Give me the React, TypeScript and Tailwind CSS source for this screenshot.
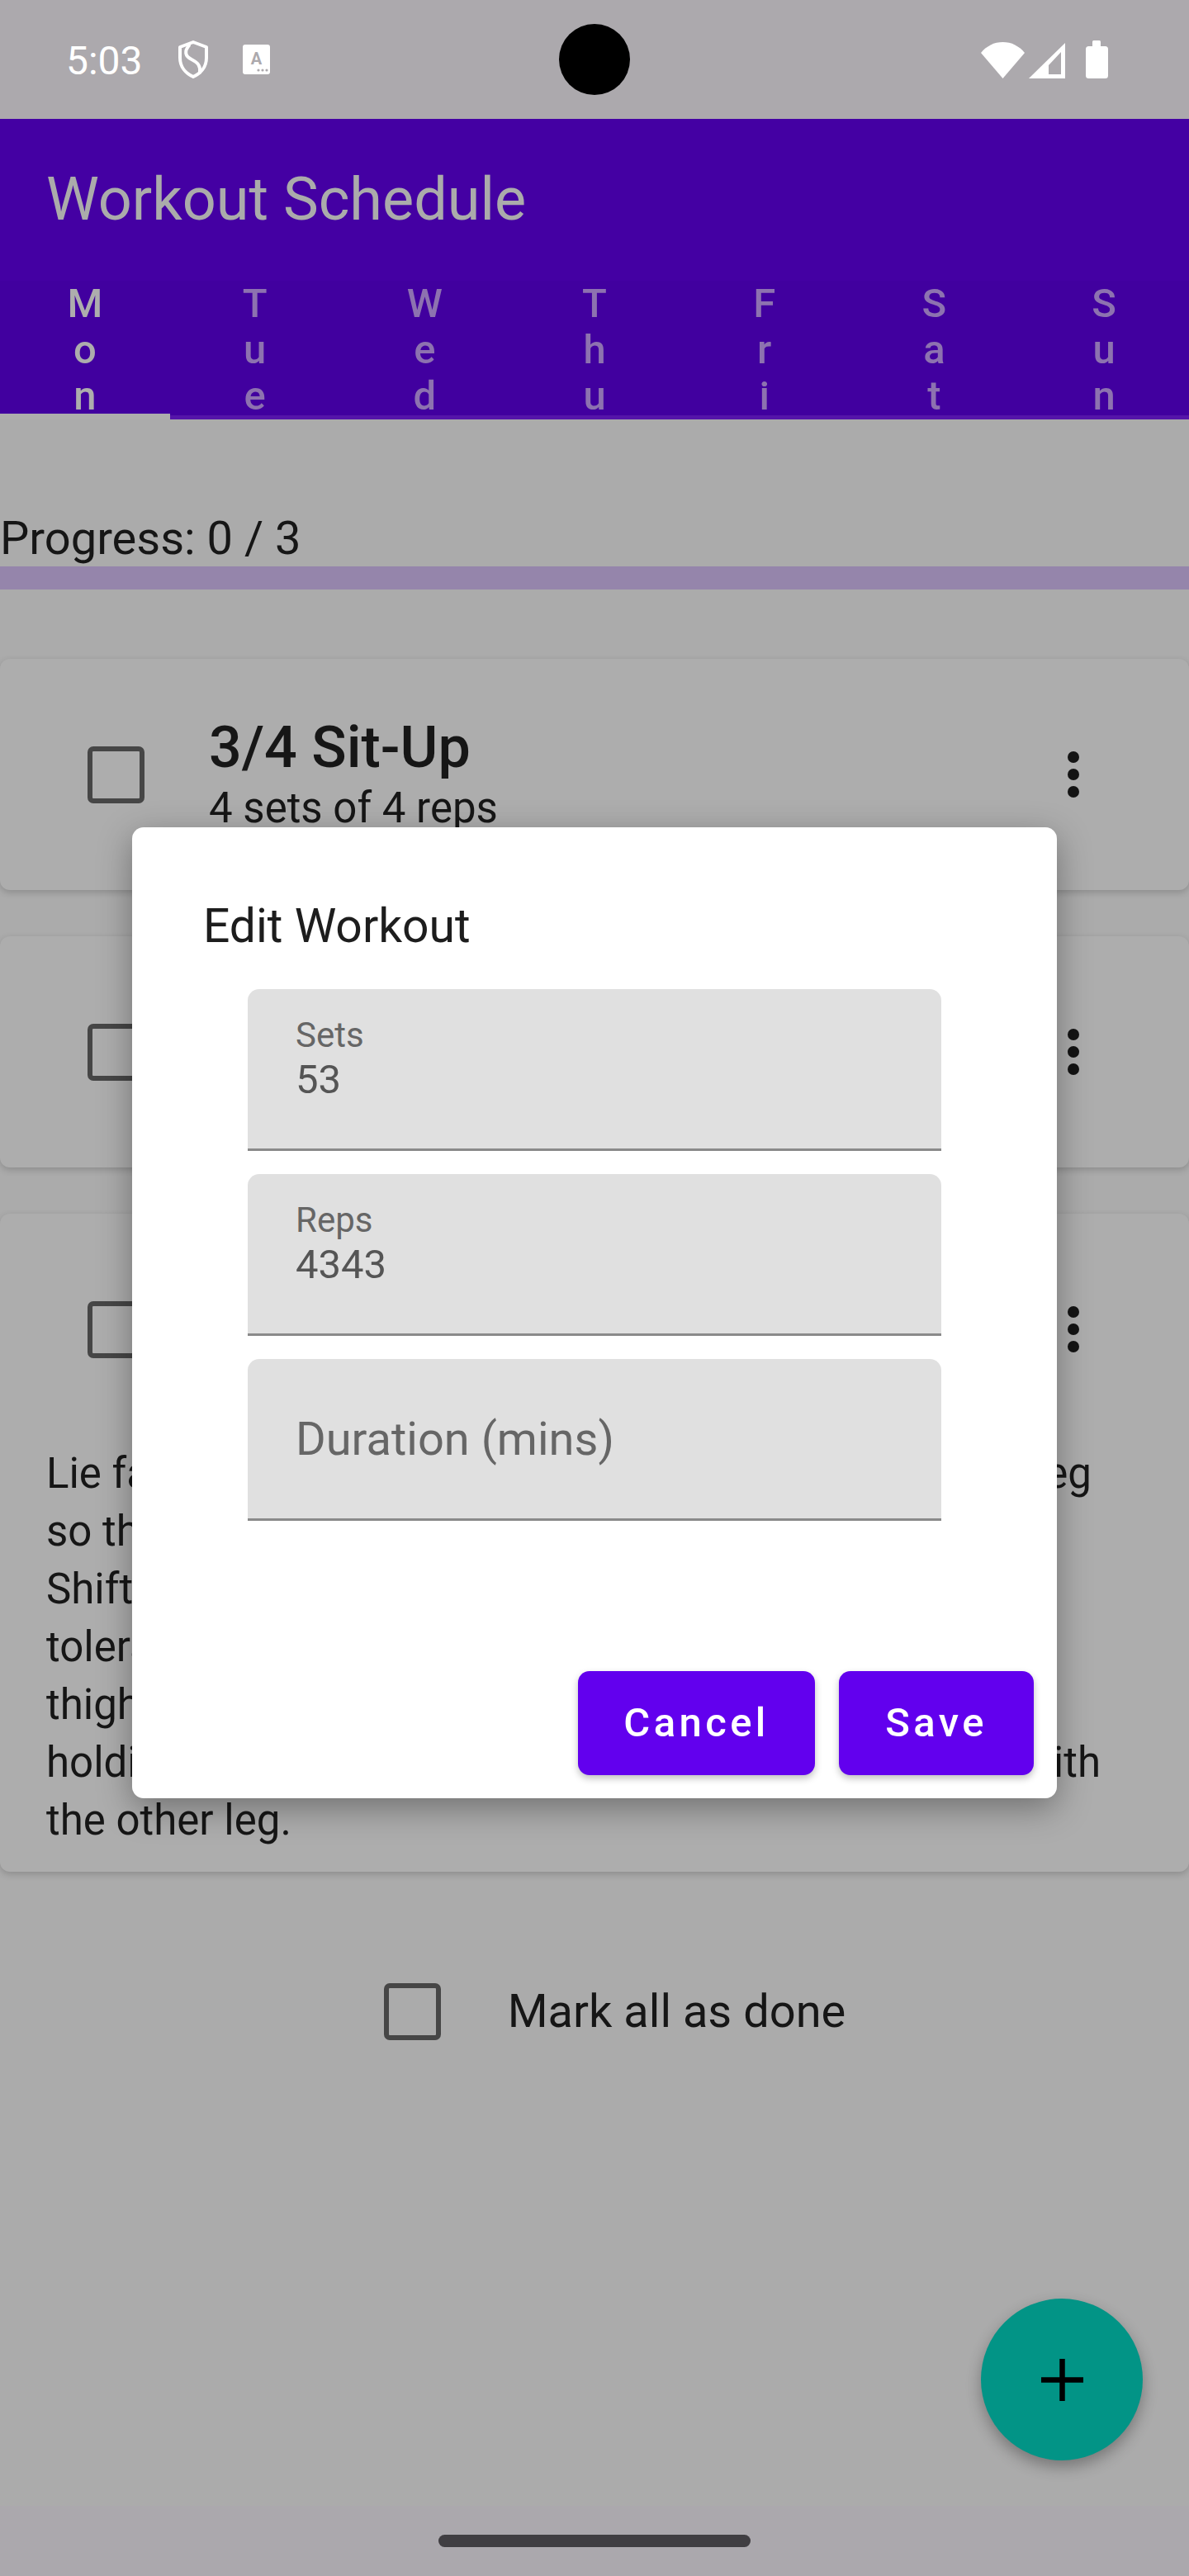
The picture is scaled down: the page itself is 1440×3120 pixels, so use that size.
import React from 'react'

const days = ['Mon', 'Tue', 'Wed', 'Thu', 'Fri', 'Sat', 'Sun']

const Checkbox = () => (
  <div className="w-[168px] h-[168px] flex items-center justify-center shrink-0">
    <div className="w-[69px] h-[69px] rounded-[7px] border-[6px] border-[#464646]" />
  </div>
)

const Kebab = () => (
  <div className="w-[168px] h-[168px] flex flex-col items-center justify-center gap-[7px] shrink-0">
    <div className="w-[14px] h-[14px] rounded-full bg-[#141414]" />
    <div className="w-[14px] h-[14px] rounded-full bg-[#141414]" />
    <div className="w-[14px] h-[14px] rounded-full bg-[#141414]" />
  </div>
)

const WorkoutRow = ({ title, detail }: { title: string; detail: string }) => (
  <div className="flex items-center h-[168px]">
    <Checkbox />
    <div className="flex-1 ml-[29px] flex flex-col">
      <span className="text-[70px] leading-[82px] font-medium text-[#161616] whitespace-nowrap">{title}</span>
      <span className="text-[51px] leading-[66px] text-[#161616] whitespace-nowrap">{detail}</span>
    </div>
    <Kebab />
  </div>
)

const Field = ({ label, value }: { label: string; value?: string }) => (
  <div className="h-[196px] bg-[#e0e0e0] rounded-t-[14px] border-b-[3px] border-[#8a8a8a] px-[58px]">
    {value ? (
      <div className="pt-[31px] flex flex-col">
        <span className="text-[42px] leading-[50px] text-[#666666]">{label}</span>
        <span className="text-[49px] leading-[58px] text-[#555555]">{value}</span>
      </div>
    ) : (
      <div className="h-full flex items-center">
        <span className="text-[56px] leading-[66px] text-[#666666]">{label}</span>
      </div>
    )}
  </div>
)

const StatusBar = () => (
  <div className="relative h-[144px] bg-[#aca9ad] flex items-center text-white">
    <span className="ml-[80px] text-[48px] leading-[56px] mt-[4px]">5:03</span>
    <svg className="ml-[41px]" width="40" height="48" viewBox="0 0 40 48" fill="none">
      <path d="M20 3 L36 9 V22 C36 33 29 41 20 45 C11 41 4 33 4 22 V9 Z" stroke="white" strokeWidth="4" strokeLinejoin="round" />
      <path d="M15 7 C9 14 10 20 18 24 C26 28 29 32 28 40" stroke="white" strokeWidth="4" strokeLinecap="round" />
    </svg>
    <svg className="ml-[40px]" width="33" height="36" viewBox="0 0 33 36">
      <rect x="0" y="0" width="33" height="36" rx="3" fill="white" />
      <text x="16.5" y="24" textAnchor="middle" fontSize="20" fontWeight="700" fontFamily="Roboto, sans-serif" fill="#aca9ad">A</text>
      <circle cx="19" cy="31" r="1.6" fill="#aca9ad" />
      <circle cx="24" cy="31" r="1.6" fill="#aca9ad" />
      <circle cx="29" cy="31" r="1.6" fill="#aca9ad" />
    </svg>
    <div className="absolute left-[677px] top-[29px] w-[86px] h-[86px] rounded-full bg-black" />
    <svg className="ml-auto mr-[98px]" width="154" height="46" viewBox="0 0 154 46">
      <path d="M26.5 46 L0 15 A33.5 33.5 0 0 1 53 15 Z" fill="white" />
      <polygon points="58,46 102,46 102,3" fill="white" />
      <polygon points="82,41 97,41 97,14 82,30" fill="#aca9ad" />
      <rect x="135" y="0" width="10" height="9" rx="1.5" fill="white" />
      <rect x="127" y="7" width="27" height="39" rx="3.5" fill="white" />
    </svg>
  </div>
)

// [left part, right part]; the gap between them sits behind the dialog
const description: [string, string][] = [
  ['Lie face up with both knees bent.', 'Lift your right leg'],
  ['so the ankle rests on top of your left knee.', ''],
  ['Shift your hips slightly until the stretch feels', ''],
  ['tolerable in your glute. Gently pull your left', ''],
  ['thigh toward your chest using both hands,', ''],
  ['holding for 30 seconds, then', 'repeat it again with'],
  ['the other leg.', ''],
]

export default function App() {
  return (
    <div className="relative w-[1440px] h-[3120px] overflow-hidden bg-[#ababab] font-[Roboto,sans-serif] flex flex-col">
      <StatusBar />

      <div className="h-[196px] bg-[#4400a3] flex items-center px-[56px]">
        <span className="text-[72px] leading-[82px] text-[#ababab]">Workout Schedule</span>
      </div>

      <div className="relative h-[168px] bg-[#41009f] flex">
        {days.map((d, i) => (
          <div key={d} className="flex-1 flex flex-col items-center">
            {d.split('').map((c, j) => (
              <span
                key={j}
                className={`text-[49px] leading-[56px] font-medium ${i === 0 ? 'text-[#adadad]' : 'text-[#8d72b0]'}`}
              >
                {c}
              </span>
            ))}
          </div>
        ))}
        <div className="absolute left-0 right-0 bottom-0 h-[5px] bg-[#5515a9]" />
        <div className="absolute left-0 bottom-0 w-[206px] h-[7px] bg-[#adadad]" />
      </div>

      <div className="mt-[111px] text-[56px] leading-[66px] text-[#161616]">Progress: 0 / 3</div>
      <div className="mt-[1px] h-[28px] bg-[#9585ab]" />

      <div className="mt-[84px] flex flex-col gap-[56px]">
        <div className="bg-[#adadad] rounded-[12px] shadow-[0_3px_8px_rgba(0,0,0,0.18)] p-[56px]">
          <WorkoutRow title="3/4 Sit-Up" detail="4 sets of 4 reps" />
        </div>
        <div className="bg-[#adadad] rounded-[12px] shadow-[0_3px_8px_rgba(0,0,0,0.18)] p-[56px]">
          <WorkoutRow title="Bird Dog" detail="3 sets of 10 reps" />
        </div>
        <div className="bg-[#adadad] rounded-[12px] shadow-[0_3px_8px_rgba(0,0,0,0.18)] pt-[56px] px-[56px] pb-[27px]">
          <WorkoutRow title="Figure 4 Stretch" detail="2 sets of 2 reps" />
          <div className="mt-[56px] text-[51px] leading-[70px] text-[#161616]">
            {description.map(([left, right], i) => (
              <div
                key={i}
                className={`flex justify-between whitespace-nowrap ${i === 0 ? 'w-[1266px]' : ''} ${i === 5 ? 'w-[1277px]' : ''}`}
              >
                <span>{left}</span>
                {right && <span>{right}</span>}
              </div>
            ))}
          </div>
        </div>
      </div>

      <div className="mt-[85px] flex items-center justify-center">
        <Checkbox />
        <span className="ml-[31px] text-[56px] leading-[66px] text-[#161616]">Mark all as done</span>
      </div>

      <div className="mt-auto h-[85px] bg-[#aba8ad] flex justify-center pt-[35px]">
        <div className="w-[378px] h-[15px] rounded-full bg-[#403e42]" />
      </div>

      <div className="absolute right-[56px] bottom-[140px] w-[196px] h-[196px] rounded-full bg-[#029486] shadow-[0_8px_18px_rgba(0,0,0,0.3)] flex items-center justify-center">
        <svg width="51" height="51" viewBox="0 0 51 51">
          <path d="M25.5 0 V51 M0 25.5 H51" stroke="black" strokeWidth="6.5" />
        </svg>
      </div>

      <div className="absolute left-[160px] top-[1002px] w-[1120px] h-[1176px] bg-white rounded-[14px] shadow-[0_12px_40px_rgba(0,0,0,0.35)] flex flex-col">
        <div className="pt-[86px] px-[86px] text-[57px] leading-[68px] text-[#1d1d1d]">Edit Workout</div>
        <div className="mt-[42px] mx-[140px] flex flex-col gap-[28px]">
          <Field label="Sets" value="53" />
          <Field label="Reps" value="4343" />
          <Field label="Duration (mins)" />
        </div>
        <div className="mt-auto flex justify-end gap-[29px] pr-[28px] pb-[28px]">
          <button className="w-[287px] h-[126px] rounded-[14px] bg-[#6200ee] text-white text-[49px] font-medium tracking-[0.09em] shadow-[0_4px_8px_rgba(0,0,0,0.25)]">
            Cancel
          </button>
          <button className="w-[236px] h-[126px] rounded-[14px] bg-[#6200ee] text-white text-[49px] font-medium tracking-[0.09em] shadow-[0_4px_8px_rgba(0,0,0,0.25)]">
            Save
          </button>
        </div>
      </div>
    </div>
  )
}
